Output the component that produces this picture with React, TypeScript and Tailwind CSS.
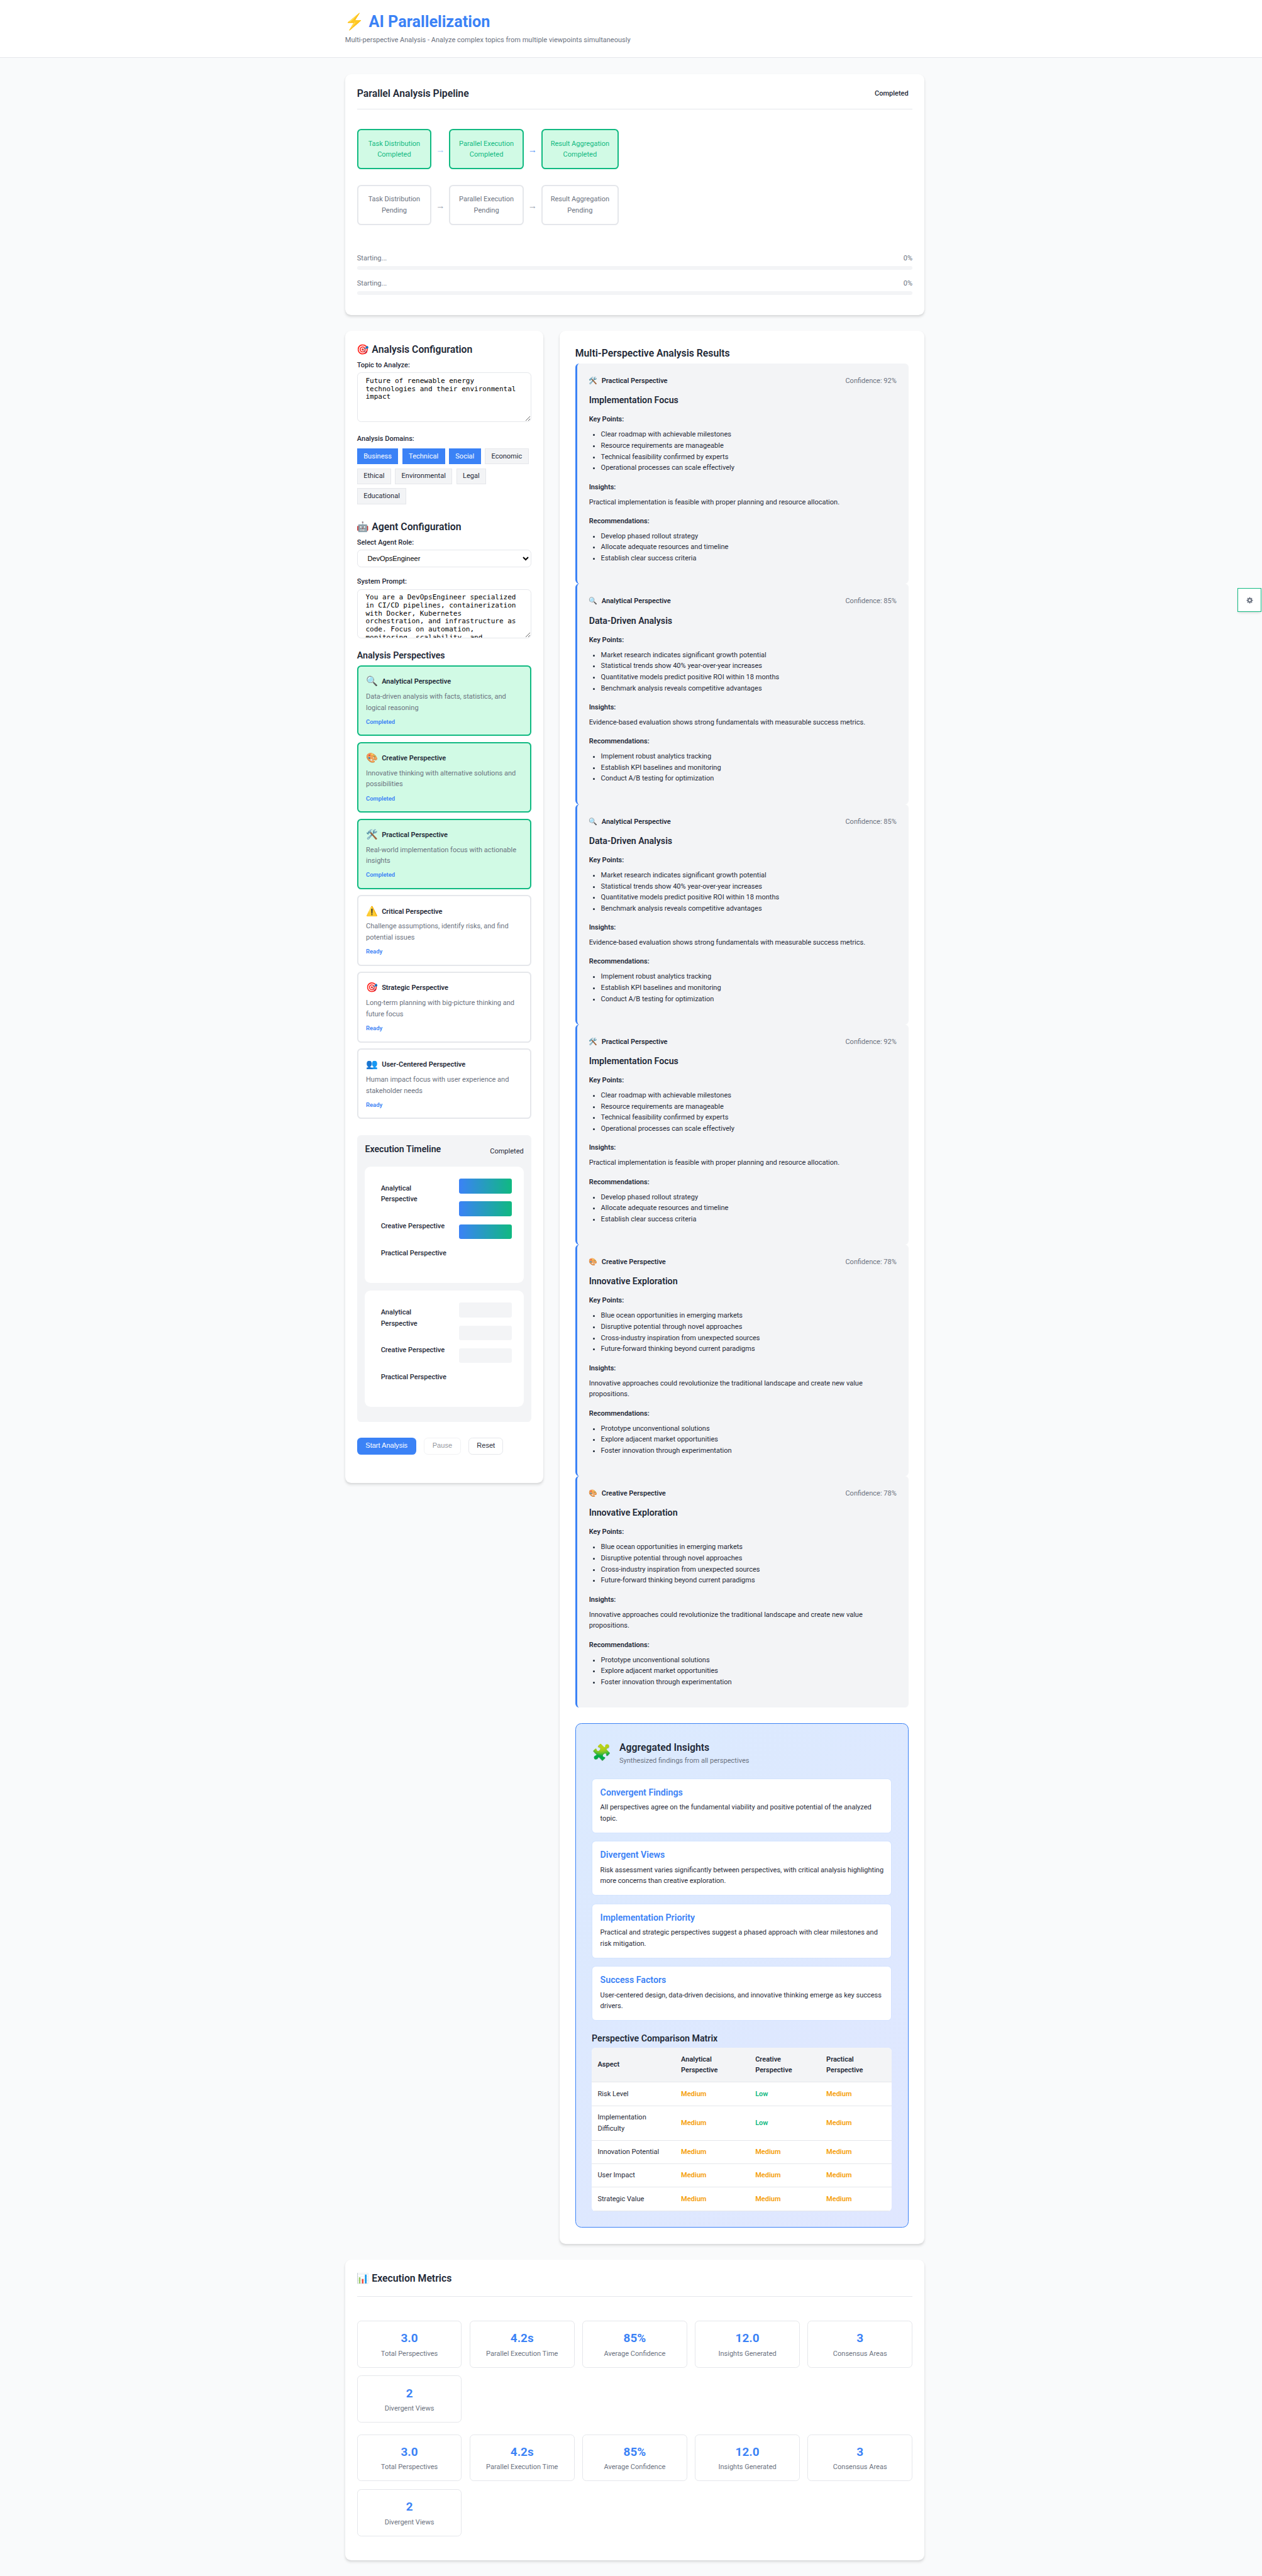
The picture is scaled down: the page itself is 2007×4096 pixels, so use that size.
import React from "react";

const steps = ["Task Distribution", "Parallel Execution", "Result Aggregation"];

const domains = [
  { name: "Business", on: true },
  { name: "Technical", on: true },
  { name: "Social", on: true },
  { name: "Economic", on: false },
  { name: "Ethical", on: false },
  { name: "Environmental", on: false },
  { name: "Legal", on: false },
  { name: "Educational", on: false },
];

const perspectives = [
  { icon: "🔍", name: "Analytical Perspective", text: "Data-driven analysis with facts, statistics, and logical reasoning", done: true },
  { icon: "🎨", name: "Creative Perspective", text: "Innovative thinking with alternative solutions and possibilities", done: true },
  { icon: "🛠️", name: "Practical Perspective", text: "Real-world implementation focus with actionable insights", done: true },
  { icon: "⚠️", name: "Critical Perspective", text: "Challenge assumptions, identify risks, and find potential issues", done: false },
  { icon: "🎯", name: "Strategic Perspective", text: "Long-term planning with big-picture thinking and future focus", done: false },
  { icon: "👥", name: "User-Centered Perspective", text: "Human impact focus with user experience and stakeholder needs", done: false },
];

type Result = {
  icon: string;
  name: string;
  confidence: string;
  title: string;
  points: string[];
  insight: string;
  recs: string[];
};

const practical: Result = {
  icon: "🛠️",
  name: "Practical Perspective",
  confidence: "92%",
  title: "Implementation Focus",
  points: [
    "Clear roadmap with achievable milestones",
    "Resource requirements are manageable",
    "Technical feasibility confirmed by experts",
    "Operational processes can scale effectively",
  ],
  insight: "Practical implementation is feasible with proper planning and resource allocation.",
  recs: ["Develop phased rollout strategy", "Allocate adequate resources and timeline", "Establish clear success criteria"],
};

const analytical: Result = {
  icon: "🔍",
  name: "Analytical Perspective",
  confidence: "85%",
  title: "Data-Driven Analysis",
  points: [
    "Market research indicates significant growth potential",
    "Statistical trends show 40% year-over-year increases",
    "Quantitative models predict positive ROI within 18 months",
    "Benchmark analysis reveals competitive advantages",
  ],
  insight: "Evidence-based evaluation shows strong fundamentals with measurable success metrics.",
  recs: ["Implement robust analytics tracking", "Establish KPI baselines and monitoring", "Conduct A/B testing for optimization"],
};

const creative: Result = {
  icon: "🎨",
  name: "Creative Perspective",
  confidence: "78%",
  title: "Innovative Exploration",
  points: [
    "Blue ocean opportunities in emerging markets",
    "Disruptive potential through novel approaches",
    "Cross-industry inspiration from unexpected sources",
    "Future-forward thinking beyond current paradigms",
  ],
  insight: "Innovative approaches could revolutionize the traditional landscape and create new value propositions.",
  recs: ["Prototype unconventional solutions", "Explore adjacent market opportunities", "Foster innovation through experimentation"],
};

const results = [practical, analytical, analytical, practical, creative, creative];

const findings = [
  { title: "Convergent Findings", text: "All perspectives agree on the fundamental viability and positive potential of the analyzed topic." },
  { title: "Divergent Views", text: "Risk assessment varies significantly between perspectives, with critical analysis highlighting more concerns than creative exploration." },
  { title: "Implementation Priority", text: "Practical and strategic perspectives suggest a phased approach with clear milestones and risk mitigation." },
  { title: "Success Factors", text: "User-centered design, data-driven decisions, and innovative thinking emerge as key success drivers." },
];

const matrix = [
  ["Risk Level", "Medium", "Low", "Medium"],
  ["Implementation Difficulty", "Medium", "Low", "Medium"],
  ["Innovation Potential", "Medium", "Medium", "Medium"],
  ["User Impact", "Medium", "Medium", "Medium"],
  ["Strategic Value", "Medium", "Medium", "Medium"],
];

const metrics = [
  ["3.0", "Total Perspectives"],
  ["4.2s", "Parallel Execution Time"],
  ["85%", "Average Confidence"],
  ["12.0", "Insights Generated"],
  ["3", "Consensus Areas"],
  ["2", "Divergent Views"],
];

const card =
  "bg-white rounded-[12px] shadow-[0_4px_6px_-1px_rgba(0,0,0,0.1),0_2px_4px_-1px_rgba(0,0,0,0.06)]";
const heading = "h-[26px] text-[20px] font-semibold leading-[28px]";
const field =
  "block w-full rounded-[8px] border border-[#e5e7eb] bg-white text-[14px] text-black";

function StepRow({ done }: { done: boolean }) {
  return (
    <div className="flex h-[80.8px] items-center">
      {steps.map((s, i) => (
        <React.Fragment key={s}>
          {i > 0 && (
            <span
              className={`w-[36px] pt-[2px] text-center font-['Liberation_Sans'] text-[18px] leading-none ${
                done ? (i === 1 ? "text-[#a5c6fb]" : "text-[#5b98f7]") : "text-[#9ca3af]"
              }`}
            >
              →
            </span>
          )}
          <div
            className={`flex h-full flex-col items-center justify-center rounded-[8px] border-[2.54px] ${
              i === 2 ? "w-[155.4px]" : "w-[150px]"
            } ${done ? "border-[#10b981] bg-[#d1fae5] text-[#10b981]" : "border-[#e5e7eb] bg-white text-[#6b7280]"}`}
          >
            <span>{s}</span>
            <span>{done ? "Completed" : "Pending"}</span>
          </div>
        </React.Fragment>
      ))}
    </div>
  );
}

function Progress() {
  return (
    <div className="mb-[16.6px]">
      <div className="mb-[4px] flex justify-between text-[#6b7280]">
        <span>Starting...</span>
        <span>0%</span>
      </div>
      <div className="h-[8px] rounded-[4px] bg-[#f3f4f6]" />
    </div>
  );
}

function TimelineBox({ filled }: { filled: boolean }) {
  return (
    <div className="mb-[16px] flex h-[234px] justify-between rounded-[12px] bg-white pl-[32px] pr-[24px]">
      <div className="flex w-[140px] flex-col gap-[32px] pt-[32.4px] font-medium">
        <span>
          Analytical
          <br />
          Perspective
        </span>
        <span className="whitespace-nowrap">Creative Perspective</span>
        <span className="whitespace-nowrap">Practical Perspective</span>
      </div>
      <div className="flex w-[106px] flex-col gap-[16px] pt-[24px]">
        {[0, 1, 2].map((i) => (
          <div
            key={i}
            className={`h-[30px] rounded-[4px] ${filled ? "bg-[linear-gradient(90deg,#3b82f6,#10b981)]" : "bg-[#f3f4f6]"}`}
          />
        ))}
      </div>
    </div>
  );
}

function ResultCard({ r }: { r: Result }) {
  return (
    <div className="rounded-[8px] border-l-[4px] border-[#3b82f6] bg-[#f3f4f6] px-[24px] pb-[40px] pt-[24px]">
      <div className="flex justify-between">
        <div className="flex gap-[8px] font-semibold">
          <span className="w-[17.4px]">{r.icon}</span>
          <span>{r.name}</span>
        </div>
        <span className="text-[#6b7280]">Confidence: {r.confidence}</span>
      </div>
      <h4 className="mt-[16px] text-[18px] font-semibold leading-[23.4px]">{r.title}</h4>
      <p className="mt-[16px] font-semibold">Key Points:</p>
      <ul className="mt-[8px] list-disc pl-[24px]">
        {r.points.map((p) => (
          <li key={p}>{p}</li>
        ))}
      </ul>
      <p className="mt-[16px] font-semibold">Insights:</p>
      <p className="mt-[8px]">{r.insight}</p>
      <p className="mt-[16px] font-semibold">Recommendations:</p>
      <ul className="mt-[8px] list-disc pl-[24px]">
        {r.recs.map((p) => (
          <li key={p}>{p}</li>
        ))}
      </ul>
    </div>
  );
}

function MetricGrid() {
  return (
    <div className="mb-[24px] grid grid-cols-5 gap-[16px]">
      {metrics.map(([v, l]) => (
        <div key={l} className="flex h-[94.7px] flex-col items-center justify-center rounded-[8px] border border-[#e5e7eb]">
          <span className="text-[24px] font-bold leading-[38.4px] text-[#3b82f6]">{v}</span>
          <span className="text-[#6b7280]">{l}</span>
        </div>
      ))}
    </div>
  );
}

function Gear() {
  return (
    <svg viewBox="-7 -7 14 14" className="h-[14px] w-[14px]" fill="none" stroke="#6b7280">
      <circle r="3.6" strokeWidth="2.6" />
      {[0, 45, 90, 135, 180, 225, 270, 315].map((a) => (
        <path key={a} d="M0 -4.5V-6.3" strokeWidth="2.2" transform={`rotate(${a})`} />
      ))}
    </svg>
  );
}

export default function App() {
  return (
    <div className="relative h-[5194px] w-[2545px] overflow-hidden bg-[#f9fafb] font-[Roboto,'Noto_Color_Emoji',sans-serif] text-[14px] leading-[22.4px] text-[#1f2937] [zoom:0.78861]">
      <header className="h-[117px] border-b border-[#e5e7eb] bg-white pl-[696px] pt-[24px]">
        <h1 className="text-[32px] font-bold leading-[41.6px] text-[#3b82f6]">⚡ AI Parallelization</h1>
        <p className="mt-[4.5px] text-[#6b7280]">
          Multi-perspective Analysis - Analyze complex topics from multiple viewpoints simultaneously
        </p>
      </header>

      <main className="ml-[696px] w-[1168px] pt-[32px]">
        <section className={`${card} h-[486px] px-[24px] pt-[24px]`}>
          <div className="flex h-[47.4px] items-start justify-between border-b border-[#e5e7eb]">
            <h2 className="text-[20px] font-semibold leading-[32px]">Parallel Analysis Pipeline</h2>
            <span className="px-[8px] py-[4px] font-medium">Completed</span>
          </div>
          <div className="mt-[40px] flex flex-col gap-[32px]">
            <StepRow done />
            <StepRow done={false} />
          </div>
          <div className="mt-[55.5px]">
            <Progress />
            <Progress />
          </div>
        </section>

        <div className="mt-[32px] flex items-start gap-[32px]">
          <aside className={`${card} h-[2323px] w-[400px] p-[24px]`}>
            <h2 className={heading}>🎯 Analysis Configuration</h2>
            <label className="mt-[8px] block font-medium">Topic to Analyze:</label>
            <textarea
              readOnly
              className={`${field} mt-[3.6px] h-[99.6px] resize-y overflow-hidden px-[16px] pb-[8px] pt-[8.8px] font-['DejaVu_Sans_Mono',monospace] leading-[16px]`}
              value="Future of renewable energy technologies and their environmental impact"
            />
            <label className="mt-[22.8px] block font-medium">Analysis Domains:</label>
            <div className="mt-[8px] flex flex-wrap gap-[8px]">
              {domains.map((d) => (
                <span
                  key={d.name}
                  className={`flex h-[32.4px] items-center border px-[12px] ${
                    d.on ? "border-[#3b82f6] bg-[#3b82f6] text-white" : "border-[#e5e7eb] bg-[#f3f4f6]"
                  }`}
                >
                  {d.name}
                </span>
              ))}
            </div>

            <h2 className={`${heading} mt-[32px]`}>🤖 Agent Configuration</h2>
            <label className="mt-[8px] block font-medium">Select Agent Role:</label>
            <select className={`${field} mt-[3.5px] h-[35.5px] px-[16px] font-['Liberation_Sans']`}>
              <option>DevOpsEngineer</option>
            </select>
            <label className="mt-[16.8px] block font-medium">System Prompt:</label>
            <textarea
              readOnly
              className={`${field} mt-[4.2px] h-[99.6px] resize-y overflow-hidden px-[16px] pb-[8px] pt-[8.8px] font-['DejaVu_Sans_Mono',monospace] leading-[16px]`}
              value="You are a DevOpsEngineer specialized in CI/CD pipelines, containerization with Docker, Kubernetes orchestration, and infrastructure as code. Focus on automation, monitoring, scalability, and reliability."
            />

            <h3 className="mt-[22.6px] text-[18px] font-semibold leading-[23.4px]">Analysis Perspectives</h3>
            <div className="mt-[8.4px] flex flex-col gap-[12px]">
              {perspectives.map((p) => (
                <div
                  key={p.name}
                  className={`h-[142.5px] rounded-[8px] border-[2.54px] px-[15.5px] pt-[15.5px] ${
                    p.done ? "border-[#10b981] bg-[#d1fae5]" : "border-[#e5e7eb] bg-white"
                  }`}
                >
                  <div className="flex h-[30px] items-center gap-[8px]">
                    <span className="w-[23.9px] text-[19.2px]">{p.icon}</span>
                    <span className="font-semibold">{p.name}</span>
                  </div>
                  <p className="mt-[4px] text-[#6b7280]">{p.text}</p>
                  <p className="mt-[7px] text-[12px] font-semibold leading-[19.2px] text-[#3b82f6]">
                    {p.done ? "Completed" : "Ready"}
                  </p>
                </div>
              ))}
            </div>

            <div className="mt-[32px] h-[578px] rounded-[8px] bg-[#f3f4f6] px-[16px] pt-[17px]">
              <div className="flex h-[47px] justify-between">
                <h3 className="text-[18px] font-semibold leading-[23.4px]">Execution Timeline</h3>
                <span className="pt-[5px]">Completed</span>
              </div>
              <TimelineBox filled />
              <TimelineBox filled={false} />
            </div>

            <div className="mt-[32px] flex gap-[16px] font-['Liberation_Sans']">
              <button className="h-[34.4px] w-[119px] rounded-[8px] bg-[#3b82f6] text-white">Start Analysis</button>
              <button className="h-[34.4px] w-[74px] rounded-[8px] border border-[#e5e7eb] bg-white opacity-50">Pause</button>
              <button className="h-[34.4px] w-[70px] rounded-[8px] border border-[#e5e7eb] bg-white">Reset</button>
            </div>
          </aside>

          <section className={`${card} h-[3857px] w-[736px] p-[32px]`}>
            <h2 className={heading}>Multi-Perspective Analysis Results</h2>
            <div className="mt-[8px]">
              {results.map((r, i) => (
                <ResultCard key={i} r={r} />
              ))}
            </div>

            <div className="mt-[31px] h-[1017.7px] rounded-[12px] border border-[#3b82f6] bg-[linear-gradient(135deg,#dbeafe,#e0e7ff)] px-[32px] pt-[32px]">
              <div className="flex h-[54.4px] items-center gap-[16px]">
                <span className="w-[39.8px] text-[32px] leading-[51.2px]">🧩</span>
                <div>
                  <h3 className="text-[20px] font-semibold leading-[32px]">Aggregated Insights</h3>
                  <p className="text-[#6b7280]">Synthesized findings from all perspectives</p>
                </div>
              </div>
              <div className="mt-[24px] flex flex-col gap-[16px]">
                {findings.map((f) => (
                  <div
                    key={f.title}
                    className="h-[110.2px] rounded-[8px] border border-[#3b82f6]/5 bg-white bg-clip-padding pl-[16px] pr-[8px] pt-[15.4px]"
                  >
                    <h4 className="text-[18px] font-semibold leading-[23.4px] text-[#3b82f6]">{f.title}</h4>
                    <p className="mt-[7.6px]">{f.text}</p>
                  </div>
                ))}
              </div>
              <h3 className="mt-[24px] text-[18px] font-semibold leading-[23.4px]">Perspective Comparison Matrix</h3>
              <div className="mt-[7.5px] overflow-hidden rounded-[8px] bg-white">
                <div className="grid h-[69.8px] grid-cols-[168.1px_149.8px_143.2px_1fr] items-center border-b border-[#e5e7eb] bg-[#f3f4f6] font-semibold">
                  <span className="px-[12px]">Aspect</span>
                  {["Analytical", "Creative", "Practical"].map((n) => (
                    <span key={n} className="px-[12px]">
                      {n}
                      <br />
                      Perspective
                    </span>
                  ))}
                </div>
                {matrix.map((row, i) => (
                  <div
                    key={row[0]}
                    className={`grid grid-cols-[168.1px_149.8px_143.2px_1fr] items-center border-b border-[#e5e7eb] ${
                      i === 1 ? "h-[69.8px]" : "h-[47.4px]"
                    }`}
                  >
                    <span className={`pl-[12px] ${i === 1 ? "w-[130px]" : ""}`}>{row[0]}</span>
                    {row.slice(1).map((v, j) => (
                      <span key={j} className={`px-[12px] font-semibold ${v === "Low" ? "text-[#10b981]" : "text-[#f59e0b]"}`}>
                        {v}
                      </span>
                    ))}
                  </div>
                ))}
              </div>
            </div>
          </section>
        </div>

        <section className={`${card} mt-[32px] h-[606px] px-[24px] pt-[24px]`}>
          <h2 className="mb-[48px] h-[51px] border-b border-[#e5e7eb] text-[20px] font-semibold leading-[27px]">
            📊 Execution Metrics
          </h2>
          <MetricGrid />
          <MetricGrid />
        </section>
      </main>

      <button className="absolute right-[1px] top-[1186px] flex h-[48px] w-[48px] items-center justify-center border border-[#10b981] bg-white shadow-[0_4px_6px_-1px_rgba(0,0,0,0.1),0_2px_4px_-1px_rgba(0,0,0,0.06)]">
        <Gear />
      </button>
    </div>
  );
}
